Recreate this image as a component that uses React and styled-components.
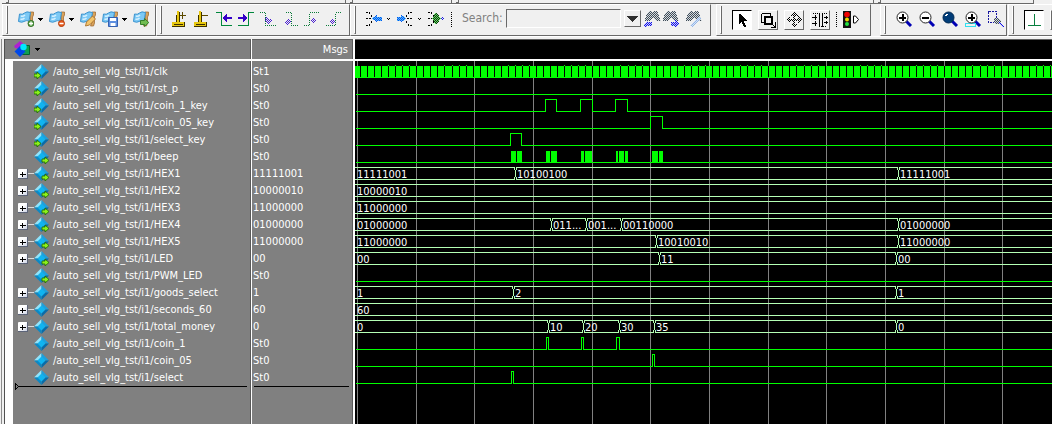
import React from "react";
import styled, { createGlobalStyle } from "styled-components";

const GlobalStyle = createGlobalStyle`
  * {
    box-sizing: border-box;
  }
  body {
    margin: 0;
    background-color: #f0f0f0;
    font-family: "DejaVu Sans Condensed", "Noto Sans", sans-serif;
    font-size: 11px;
  }
`;

const Page = styled.div`
  display: flex;
  flex-direction: column;
  height: 100vh;
`;
const Strip = styled.div`
  display: flex;
  height: 4px;
  padding-left: 2px;
`;
const StripPart = styled.div`
  width: ${(p) => p.$width}px;
  border-right: 1px solid #696969;
  border-bottom: 1px solid #696969;
  padding-left: 4px;
  &::before {
    content: "";
    display: block;
    width: 2px;
    height: 2px;
    border-right: 1px solid #696969;
    border-bottom: 1px solid #696969;
  }
`;
const Toolbars = styled.div`
  display: flex;
  height: 33px;
  padding-left: 2px;
  border-bottom: 1px solid #fff;
`;
const Toolbar = styled.div`
  display: flex;
  flex: ${(p) => (p.$width ? `0 0 ${p.$width}px` : "1 1 0")};
  min-width: 0;
  overflow: hidden;
  margin-right: ${(p) => p.$after || 0}px;
  border-top: 1px solid #fff;
  border-right: ${(p) => (p.$width ? "1px solid #696969" : "none")};
  border-bottom: 1px solid #696969;
  border-left: 1px solid #fff;
`;
const Grip = styled.div`
  width: 2px;
  height: 28px;
  margin: 1px 10px 0 3px;
  flex-shrink: 0;
  border-left: 1px solid #fff;
  border-right: 1px solid #696969;
  border-bottom: 1px solid #696969;
`;
const Tools = styled.div`
  display: flex;
  align-items: flex-start;
  gap: 6px;
  padding-top: 6px;
  min-width: 0;
`;
const Tool = styled.button`
  display: flex;
  align-items: center;
  gap: 4px;
  padding: 0;
  border: none;
  background: none;
`;
const PushTool = styled.button`
  width: 20px;
  height: 20px;
  padding: 0;
  display: flex;
  flex-shrink: 0;
  align-items: center;
  justify-content: center;
  margin-top: -1px;
  border: 1px solid;
  border-color: ${(p) => (p.$on ? "#000 #fff #fff #000" : "#fff #696969 #696969 #fff")};
  background-color: ${(p) => (p.$on ? "#fff" : "#f0f0f0")};
`;
const PlainTool = styled(PushTool)`
  flex-shrink: 1;
  min-width: 0;
`;
const Divider = styled.div`
  height: 15px;
  margin-top: 1px;
  border-left: 1px dotted #000;
`;
const SearchBox = styled.div`
  display: flex;
  align-items: flex-start;
  gap: 3px;
  margin-left: 4px;
  color: #808080;
`;
const SearchLabel = styled.label`
  width: 41px;
  font-size: 12px;
  line-height: 14px;
`;
const SearchInput = styled.input`
  width: 115px;
  height: 19px;
  margin-top: -2px;
  border: 1px solid;
  border-color: #696969 #fff #fff #696969;
  background-color: #f0f0f0;
  font: inherit;
`;
const DropButton = styled(PushTool)`
  width: 17px;
  height: 17px;
`;
const FindPair = styled.div`
  display: flex;
  gap: 1px;
`;
const Window = styled.div`
  flex: 1;
  display: flex;
  min-height: 0;
  margin-top: 2px;
  margin-left: 1px;
  padding-left: 2px;
  border-left: 1px solid #8c8c8c;
`;
const Pane = styled.section`
  display: flex;
  flex-direction: column;
  flex: ${(p) => (p.$width ? `0 0 ${p.$width}px` : "1")};
  min-width: 0;
  background-color: ${(p) => (p.$dark ? "#000" : "#808080")};
  border-left: ${(p) => (p.$first ? "1px solid #505050" : "none")};
  border-right: ${(p) => p.$gutter || 0}px solid #fff;
  box-shadow: ${(p) => (p.$width ? "inset -1px 0 #5a5a5a" : "none")};
`;
const PaneHead = styled.div`
  display: flex;
  align-items: center;
  justify-content: ${(p) => (p.$right ? "flex-end" : "flex-start")};
  height: 22px;
  flex-shrink: 0;
  padding: 0 5px 0 9px;
  gap: 4px;
  color: #fff;
  border-top: 1px solid #606060;
  border-bottom: 2px solid #fff;
`;
const PaneBody = styled.div`
  flex: 1;
  min-height: 0;
  overflow: hidden;
  padding-top: ${(p) => (p.$flush ? 0 : 2)}px;
  border-left: ${(p) => (p.$tree ? "8px solid #fff" : "none")};
`;
const List = styled.ul`
  list-style: none;
  margin: 0;
  padding: 0;
`;
const Row = styled.li`
  display: flex;
  align-items: center;
  height: 17px;
  padding-left: ${(p) => p.$indent}px;
  color: #fff;
  white-space: nowrap;
`;
const Expander = styled.button`
  width: 10px;
  height: 10px;
  padding: 0;
  display: flex;
  border: none;
  border-radius: 1px;
  background: linear-gradient(135deg, #fff 40%, #c4cce0);
`;
const Branch = styled.div`
  width: 6px;
  height: 1px;
  background-color: ${(p) => (p.$shown ? "#d8d8d8" : "transparent")};
`;
const NoExpander = styled.div`
  width: 10px;
`;
const SignalName = styled.span`
  margin-left: 4px;
`;
const InsertLine = styled.div`
  display: flex;
  align-items: center;
  height: 7px;
  margin: -3px 4px 0 2px;
  &::after {
    content: "";
    flex: 1;
    height: 1px;
    background-color: #000;
  }
`;
const Waves = styled.svg`
  display: block;
  width: 100%;
  height: 100%;
`;
const Patterns = styled.svg`
  display: block;
  width: 0;
  height: 0;
`;

const Icon = ({ w = 16, h = 16, children }) => (
  <svg width={w} height={h} viewBox={`0 0 ${w} ${h}`} shapeRendering="crispEdges" fill="none">
    {children}
  </svg>
);

const Dither = ({ id, color, back }) => (
  <pattern id={id} width="2" height="2" patternUnits="userSpaceOnUse">
    {back && <path d="M0 0h2v2h-2z" fill={back} />}
    <path d="M0 0h1v1h-1zM1 1h1v1h-1z" fill={color} />
  </pattern>
);

const Arrow = () => (
  <Icon w={5} h={3}>
    <path d="M0 0h5v1h-1v1h-1v1h-1v-1h-1v-1h-1z" fill="#000" />
  </Icon>
);

const SmallArrow = () => (
  <Icon w={4} h={3}>
    <path d="M0 0h1v1h-1zM2 0h1v1h-1zM1 1h1v1h-1z" fill="#000" />
  </Icon>
);

const Flag = ({ kind }) => (
  <svg width="16" height="16" viewBox="0 0 16 16" fill="none">
    <path d="M12 1h3.500v3l-1 2v6l-1 3h-3l2-5z" fill="#d9a35c" stroke="#9a6328" strokeWidth=".7" />
    <path d="M1.500 3q3 1 5-1t6-.5l-1.500 8.500q-3-1-5 .5t-5.500 0z" fill="#7cc9f5" stroke="#3b93cf" />
    <path d="M3 5q2 1 4-1M2.500 8q2 1 4-1" stroke="#d5f0ff" strokeWidth="1.500" />
    {kind === "add" && (
      <>
        <circle cx="13" cy="12.500" r="3" fill="#5aa348" stroke="#35762b" />
        <path d="M11 12.500h4M13 10.500v4" stroke="#fff" strokeWidth="1.300" />
      </>
    )}
    {kind === "remove" && (
      <>
        <circle cx="12.500" cy="12.500" r="3" fill="#e85a1c" stroke="#b83e0c" />
        <path d="M10.500 12.500h4" stroke="#fff" strokeWidth="1.500" />
      </>
    )}
    {kind === "edit" && (
      <path d="M5.500 15l1-4 6-6 3 3-6 6z" fill="#f2c36b" stroke="#a8702a" strokeWidth=".9" />
    )}
    {kind === "save" && (
      <>
        <path d="M6.500 6.500h9v9h-9z" fill="#5d8fe0" stroke="#3561b0" />
        <path d="M8 7h6v3h-6zM8.500 12h5v3h-5z" fill="#fff" />
      </>
    )}
    {kind === "go" && (
      <path d="M7.500 9.500h4v-2l4.300 4-4.300 4v-2h-4z" fill="#72bd52" stroke="#36802c" />
    )}
  </svg>
);

const CursorIcon = ({ add }) => (
  <Icon>
    <path d="M5 0h2v11h-2zM1 11h10v1h-10z" fill="#e8c810" />
    <path d="M7 1h1v10h-1zM4 4h1v7h-1z" fill="#3c3000" />
    <path d="M0 11h12v4h-12z" fill="#e8c810" />
    <path d="M0 15h13v1h-13zM12 11h1v5h-1zM2 13h9v1h-9z" fill="#3c3000" />
    <path d="M8 4h6v1h-6z" fill="#5c4a00" />
    {add && <path d="M10 1h1v7h-1z" fill="#5c4a00" />}
  </Icon>
);

const EdgeIcon = ({ next }) => (
  <Icon>
    <path d={next ? "M0 14.500h10.500V1.500H16" : "M0 1.500h5.500V14.500H16"} stroke="#00873c" />
    <path
      d={next ? "M0 6h5v-3h1v1h1v1h1v1h1v2h-1v1h-1v1h-1v1h-1v-3h-5z" : "M16 6h-5v-3h-1v1h-1v1h-1v1h-1v2h1v1h1v1h1v1h1v-3h5z"}
      fill="#3400c8"
    />
  </Icon>
);

const fadedEdges = [
  { id: "Previous falling", line: "M0 1.500h5M5.500 2v12M5 14.500h11", head: "M6 5l3 3 3 1-4 4-3-4z" },
  { id: "Next falling", line: "M4 1.500h6M9.500 2v12M9 14.500h7", head: "M2 11l4-3 3 3-3 3z" },
  { id: "Previous rising", line: "M0 14.500h6M5.500 14V2M6 1.500h9", head: "M6 9l3-3 4 3-4 3z" },
  { id: "Next rising", line: "M0 14.500h9M9.500 14V2M10 1.500h5", head: "M3 10l3-3 3 3-3 3z" },
];

const FadedEdge = ({ line, head }) => (
  <Icon>
    <path d={line} stroke="#0a7a38" strokeDasharray="1 1" />
    <path d={head} fill="url(#ditherPurple)" />
  </Icon>
);

const TraceIcon = ({ kind }) => (
  <Icon w={17}>
    {kind === "in" ? (
      <path d="M15 1.500h-3l-3 4M15 7.500h-5M15 14.500h-3l-3-4" stroke="#000" strokeDasharray="2 1" />
    ) : (
      <path d="M0 1.500h3l3 4M0 7.500h6M0 14.500h3l3-4" stroke="#000" strokeDasharray="2 1" />
    )}
    {kind === "out" && <path d="M6 7.500l5-4v2h5v4h-5v2z" fill="url(#ditherSky)" />}
    {kind === "in" && <path d="M9 7.500l-5-4v2h-4v4h4v2z" fill="url(#ditherSky)" />}
    {kind === "all" && (
      <>
        <path d="M8 1l5 6.500-5 6.500-4-6.500z" fill="url(#ditherGreen)" />
        <path d="M13 7h1v1h-1zM15 7h1v1h-1zM14 6h1v1h-1zM14 8h1v1h-1z" fill="#2020e0" />
      </>
    )}
  </Icon>
);

const Binoculars = ({ kind }) => (
  <Icon w={17}>
    <path
      d="M5 0h3l1 2 1-2h3l2 4 2 6h-5l-2-3h-2l-2 3h-5l1-5z"
      fill="url(#ditherGray)"
    />
    {kind === "back" && <path d="M0 13l4-4v2h4v4h-4l-3 1z" fill="url(#ditherBlue)" />}
    {kind === "forward" && <path d="M17 13l-4-4v2h-4v4h4v2z" fill="url(#ditherBlue)" />}
    {kind === "options" && <path d="M5 15l8-9 3 1-8 9z" fill="url(#ditherPale)" />}
  </Icon>
);

const Magnifier = ({ kind }) => (
  <Icon w={17}>
    <path d="M10 10l5 5" stroke="#0000b4" strokeWidth="3" shapeRendering="auto" />
    {kind === "range" && <path d="M.5 12.500h10v3h-10z" stroke="#30e0f0" />}
    <circle
      cx="6.500"
      cy="6.500"
      r="5.500"
      fill={kind === "full" ? "#003c78" : "#fff"}
      stroke={kind === "full" ? "#002850" : "#222"}
      shapeRendering="auto"
    />
    {kind === "full" && <path d="M4 3h2v1h-1v1h-2v-1h1z" fill="#fff" />}
    {(kind === "in" || kind === "range") && <path d="M6 3h2v7h-2z" fill="#000" />}
    {kind !== "full" && <path d="M3 6h7v2h-7z" fill="#000" />}
  </Icon>
);

const ZoomArea = () => (
  <Icon>
    <path d="M.5 .5h8v11h-8z" stroke="#1818a0" strokeDasharray="2 1" />
    <path d="M6 7h4l3 3v2l-3 1h-3l-1-3z" fill="url(#ditherGray)" />
    <path d="M11 11l5 4v1h-2l-4-4z" fill="url(#ditherBlue)" />
  </Icon>
);

const ModeIcon = ({ kind }) => (
  <Icon>
    {kind === "select" && (
      <path d="M5 2v10h1v-1h1v-1h1v2h1v2h1v1h2v-2h-1v-2h-1v-2h3v-1h-1v-1h-1v-1h-1v-1h-1v-1h-1v-1h-1v-1h-1v-1z" fill="#000" />
    )}
    {kind === "zoom" && (
      <>
        <path d="M1.500 1.500h9v3M1.500 1.500v9h3" stroke="#000" />
        <path d="M5 5h7v7h-7z" stroke="#000" strokeWidth="2" />
        <path d="M11 11l4 4M15.500 10v5.500h-5" stroke="#000" />
      </>
    )}
    {kind === "pan" && (
      <path
        d="M8 0l4 4h-3v3h3v-3l4 4-4 4v-3h-3v3h3l-4 4-4-4h3v-3h-3v3l-4-4 4-4v3h3v-3h-3z"
        fill="url(#ditherBlack)"
      />
    )}
    {kind === "edit" && (
      <>
        <path d="M1 1.500h6M7 14.500h8M10 1.500h6" stroke="#000" strokeDasharray="1 1" />
        <path d="M7.500 1v14M10.500 1v14" stroke="#000" />
        <path d="M0 5.500h5M0 11.500h5M3.500 3v5M3.500 9v5M12 5.500h4M12 10.500h4M14.500 4v3M14.500 9v3" stroke="#000" />
      </>
    )}
  </Icon>
);

const TrafficLight = () => (
  <svg width="16" height="17" viewBox="0 0 16 17" fill="none">
    <path d="M0 0h8v17h-8z" fill="#101010" />
    <circle cx="4" cy="3.500" r="2.800" fill="#f00000" />
    <circle cx="4" cy="8.500" r="2" fill="#f0d800" />
    <circle cx="4" cy="13" r="2" fill="#20e040" />
    <path d="M10.500 5v7h2l3-3.500-3-3.500z" fill="#fff" stroke="#000" />
  </svg>
);

const WaveMenuIcon = () => (
  <svg width="17" height="17" viewBox="0 0 17 17">
    <path d="M0 5l6-5 5 4-4 4-6-1z" fill="#b020d0" />
    <path d="M8.500 4.500h7v9h-7z" fill="#10a050" stroke="#066030" />
    <path d="M6 5l5.500 5.500-5.500 5.500-5.500-5.500z" fill="#0048e8" />
    <circle cx="9.500" cy="6" r="3.200" fill="#00e8ff" />
  </svg>
);

const SignalIcon = ({ dir }) => (
  <svg width="15" height="15" viewBox="0 0 15 15">
    <path d="M7.500 0L0 7.500l4.500 0 3-3z" fill="#90e4fc" />
    <path d="M7.500 0L15 7.500l-4.500 0-3-3z" fill="#1ea0dc" />
    <path d="M15 7.500L7.500 15v-4.500l3-3z" fill="#0a6ca8" />
    <path d="M0 7.500L7.500 15v-4.500l-3-3z" fill="#0c88c4" />
    <path d="M7.500 3.500l4 4-4 4-4-4z" fill="#10b4f0" />
    {dir && (
      <path
        transform={dir === "in" ? "translate(0 8)" : "translate(8 8)"}
        d="M0 2h3v-2l4 3.500-4 3.500v-2h-3z"
        fill="#8cf01c"
        stroke="#1c6a00"
        strokeWidth=".8"
      />
    )}
  </svg>
);

// wave: "clock", { pulses }, { bursts } or { bus }, x values in pane pixels
const signals = [
  { name: "clk", value: "St1", dir: "in", wave: { clock: true } },
  { name: "rst_p", value: "St0", dir: "in", wave: { pulses: [] } },
  { name: "coin_1_key", value: "St0", dir: "in", wave: { pulses: [[190, 201], [225, 237], [260, 272]] } },
  { name: "coin_05_key", value: "St0", dir: "in", wave: { pulses: [[295, 307]] } },
  { name: "select_key", value: "St0", dir: "in", wave: { pulses: [[155, 166]] } },
  {
    name: "beep",
    value: "St0",
    dir: "out",
    wave: {
      pulses: [],
      bursts: [[156, 161], [162, 167], [191, 195], [196, 202], [226, 229], [230, 237], [261, 263], [264, 269], [270, 273], [297, 303], [304, 308]],
    },
  },
  { name: "HEX1", value: "11111001", dir: "out", wave: { bus: [[0, "11111001"], [160, "10100100"], [543, "11111001"]] } },
  { name: "HEX2", value: "10000010", dir: "out", wave: { bus: [[0, "10000010"]] } },
  { name: "HEX3", value: "11000000", dir: "out", wave: { bus: [[0, "11000000"]] } },
  {
    name: "HEX4",
    value: "01000000",
    dir: "out",
    wave: { bus: [[0, "01000000"], [196, "011..."], [231, "001..."], [266, "00110000"], [543, "01000000"]] },
  },
  { name: "HEX5", value: "11000000", dir: "out", wave: { bus: [[0, "11000000"], [301, "10010010"], [543, "11000000"]] } },
  { name: "LED", value: "00", dir: "out", wave: { bus: [[0, "00"], [304, "11"], [541, "00"]] } },
  { name: "PWM_LED", value: "St0", dir: "out", wave: { pulses: [] } },
  { name: "goods_select", value: "1", wave: { bus: [[0, "1"], [158, "2"], [541, "1"]] } },
  { name: "seconds_60", value: "60", wave: { bus: [[0, "60"]] } },
  { name: "total_money", value: "0", wave: { bus: [[0, "0"], [193, "10"], [228, "20"], [264, "30"], [299, "35"], [541, "0"]] } },
  { name: "coin_1", value: "St0", wave: { pulses: [[191, 193], [226, 228], [261, 264]] } },
  { name: "coin_05", value: "St0", wave: { pulses: [[297, 299]] } },
  { name: "select", value: "St0", wave: { pulses: [[156, 158]] } },
];

const ROW = 17;
const HIGH = 4;
const LOW = 16;
const END = 4000;
const GRID = 58.67;
const CLOCK = 7.04;

const gridLines = [...Array(68).keys()].map((n) => Math.floor(2.4 + n * GRID));
const clockGaps = [...Array(560).keys()].map((k) => Math.floor(5.5 + k * CLOCK));

const Clock = () => (
  <>
    <rect x="0" y="5" width={END} height="12" fill="#00ff00" />
    {clockGaps.map((x, k) => (
      <g key={x}>
        <rect x={x} y="5" width="1" height="11" fill="#000" />
        {k % 8.33 >= 3.6 && k % 8.33 < 7.6 && <rect x={x} y="4" width="1" height="1" fill="#00ff00" />}
      </g>
    ))}
  </>
);

const Level = ({ pulses, bursts = [] }) => (
  <>
    <path
      d={`M1 ${LOW}.5${pulses.map(([a, b]) => `H${a}.5V${HIGH}.5H${b}.5V${LOW}.5`).join("")}H${END}`}
      stroke="#00ff00"
      fill="none"
    />
    {bursts.map(([a, b]) => (
      <rect key={a} x={a} y={HIGH + 1} width={b - a} height={LOW - HIGH} fill="#00ff00" />
    ))}
  </>
);

const Bus = ({ bus }) => (
  <>
    {bus.map(([x, label], i) => {
      const end = i + 1 < bus.length ? bus[i + 1][0] : END;
      return (
        <g key={x}>
          <path
            d={`M${x ? x + 1 : 0} ${HIGH}.5H${end}M${x ? x + 1 : 0} ${LOW}.5H${end}`}
            stroke="#b4ffb4"
          />
          {x > 0 && (
            <path
              d={`M${x - 0.5} 4v3M${x + 1.5} 4v3M${x + 0.5} 7v7M${x - 0.5} 14v3M${x + 1.5} 14v3`}
              stroke="#b4ffb4"
            />
          )}
          <text x={x + 2} y="15" fill="#fff">
            {label}
          </text>
        </g>
      );
    })}
  </>
);

const Wave = ({ wave }) => {
  if (wave.clock) return <Clock />;
  if (wave.bus) return <Bus bus={wave.bus} />;
  return <Level pulses={wave.pulses} bursts={wave.bursts} />;
};

const InsertMark = () => (
  <Icon w={4} h={7}>
    <path d="M.5 .5v6l3-3z" stroke="#000" />
  </Icon>
);

const App = () => {
  return (
    <Page>
      <GlobalStyle />
      <Patterns aria-hidden="true">
        <defs>
          <Dither id="ditherBlack" color="#000" />
          <Dither id="ditherGray" color="#404c58" back="#d4dade" />
          <Dither id="ditherBlue" color="#1010e8" back="#c8c8f8" />
          <Dither id="ditherSky" color="#0058f0" back="#58b4f8" />
          <Dither id="ditherGreen" color="#103010" back="#60e060" />
          <Dither id="ditherPurple" color="#4a20d0" />
          <Dither id="ditherPale" color="#90b4e8" back="#d8e4f4" />
        </defs>
      </Patterns>
      <Strip>
        <StripPart $width={344} />
        <StripPart $width={106} />
        <StripPart $width={422} />
        <StripPart $width={160} />
      </Strip>
      <Toolbars>
        <Toolbar $width={154}>
          <Grip />
          <Tools>
            <Tool aria-label="Add bookmark"><Flag kind="add" /><Arrow /></Tool>
            <Tool aria-label="Delete bookmark"><Flag kind="remove" /><Arrow /></Tool>
            <Tool aria-label="Edit bookmark"><Flag kind="edit" /></Tool>
            <Tool aria-label="Save bookmark"><Flag kind="save" /><Arrow /></Tool>
            <Tool aria-label="Go to bookmark"><Flag kind="go" /></Tool>
          </Tools>
        </Toolbar>
        <Toolbar $width={194}>
          <Grip />
          <Tools>
            <Tool aria-label="Insert cursor"><CursorIcon add /></Tool>
            <Tool aria-label="Delete cursor"><CursorIcon /></Tool>
            <Tool aria-label="Previous transition"><EdgeIcon /></Tool>
            <Tool aria-label="Next transition"><EdgeIcon next /></Tool>
            {fadedEdges.map((edge) => (
              <Tool key={edge.id} aria-label={edge.id} disabled>
                <FadedEdge line={edge.line} head={edge.head} />
              </Tool>
            ))}
          </Tools>
        </Toolbar>
        <Toolbar $width={361} $after={5}>
          <Grip />
          <Tools>
            <Tool aria-label="Show drivers"><TraceIcon kind="out" /><SmallArrow /></Tool>
            <Tool aria-label="Show readers"><TraceIcon kind="in" /><SmallArrow /></Tool>
            <Tool aria-label="Expand net"><TraceIcon kind="all" /></Tool>
            <Divider />
            <SearchBox>
              <SearchLabel htmlFor="search">Search:</SearchLabel>
              <SearchInput id="search" type="text" disabled />
              <DropButton aria-label="Search history">
                <Icon w={11} h={6}>
                  <path d="M0 0h11v1h-1v1h-1v1h-1v1h-1v1h-1v1h-1v-1h-1v-1h-1v-1h-1v-1h-1v-1h-1z" fill="#303030" />
                </Icon>
              </DropButton>
              <FindPair>
                <Tool aria-label="Search back" disabled><Binoculars kind="back" /></Tool>
                <Tool aria-label="Search forward" disabled><Binoculars kind="forward" /></Tool>
              </FindPair>
            </SearchBox>
            <Tool aria-label="Search options" disabled><Binoculars kind="options" /></Tool>
          </Tools>
        </Toolbar>
        <Toolbar $width={155} $after={9}>
          <Grip />
          <Tools>
            <PushTool $on aria-label="Select mode"><ModeIcon kind="select" /></PushTool>
            <PushTool aria-label="Zoom mode"><ModeIcon kind="zoom" /></PushTool>
            <PushTool aria-label="Pan mode"><ModeIcon kind="pan" /></PushTool>
            <PushTool aria-label="Edit mode"><ModeIcon kind="edit" /></PushTool>
            <Divider />
            <Tool aria-label="Stop drawing"><TrafficLight /></Tool>
          </Tools>
        </Toolbar>
        <Toolbar $width={127} $after={1}>
          <Grip />
          <Tools>
            <Tool aria-label="Zoom in"><Magnifier kind="in" /></Tool>
            <Tool aria-label="Zoom out"><Magnifier kind="out" /></Tool>
            <Tool aria-label="Zoom full"><Magnifier kind="full" /></Tool>
            <Tool aria-label="Zoom on cursor"><Magnifier kind="range" /></Tool>
            <Tool aria-label="Zoom to area" disabled><ZoomArea /></Tool>
          </Tools>
        </Toolbar>
        <Toolbar>
          <Grip />
          <Tools>
            <PushTool $on aria-label="Leaf view">
              <Icon>
                <path d="M2 13.500h13M8.500 2v11" stroke="#0a8040" />
              </Icon>
            </PushTool>
            <PlainTool aria-label="Tree view" />
          </Tools>
        </Toolbar>
      </Toolbars>
      <Window>
        <Pane $first $width={248} $gutter={1}>
          <PaneHead>
            <WaveMenuIcon />
            <Arrow />
          </PaneHead>
          <PaneBody $tree>
            <List>
              {signals.map((s) => (
                <Row key={s.name} $indent={5}>
                  {s.wave.bus ? (
                    <Expander aria-label={`Expand ${s.name}`}>
                      <Icon w={10} h={10}>
                        <path d="M2 5h6v1h-6zM4 3h1v5h-1z" fill="#000" />
                        <path d="M0 9h10v1h-10zM9 0h1v10h-1z" fill="#5c6478" />
                      </Icon>
                    </Expander>
                  ) : (
                    <NoExpander />
                  )}
                  <Branch $shown={s.wave.bus} />
                  <SignalIcon dir={s.dir} />
                  <SignalName>/auto_sell_vlg_tst/i1/{s.name}</SignalName>
                </Row>
              ))}
            </List>
            <InsertLine>
              <InsertMark />
            </InsertLine>
          </PaneBody>
        </Pane>
        <Pane $width={103} $gutter={2}>
          <PaneHead $right>Msgs</PaneHead>
          <PaneBody>
            <List>
              {signals.map((s) => (
                <Row key={s.name} $indent={1}>
                  {s.value}
                </Row>
              ))}
            </List>
            <InsertLine />
          </PaneBody>
        </Pane>
        <Pane $dark>
          <PaneHead />
          <PaneBody $flush>
            <Waves shapeRendering="crispEdges">
              {gridLines.map((x) => (
                <rect key={x} x={x} y="0" width="1" height="100%" fill="#808080" />
              ))}
              {signals.map((s, i) => (
                <g key={s.name} transform={`translate(0 ${i * ROW})`}>
                  <Wave wave={s.wave} />
                </g>
              ))}
            </Waves>
          </PaneBody>
        </Pane>
      </Window>
    </Page>
  );
};

export default App;
